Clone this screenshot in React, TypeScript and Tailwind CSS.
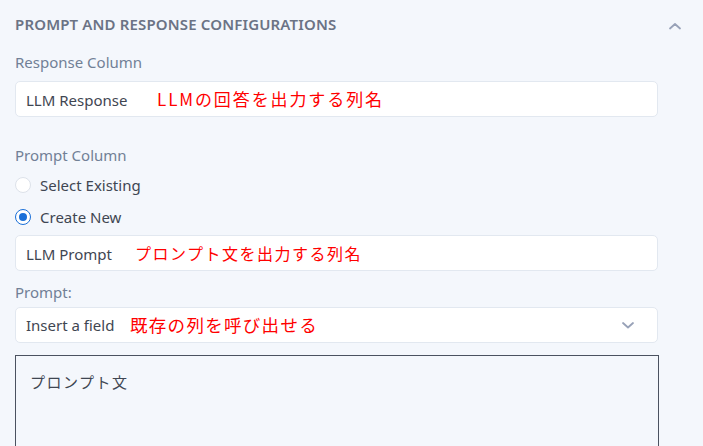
import React from "react";

const font = { fontFamily: '"Noto Sans", "Noto Sans CJK JP", sans-serif' };

function Label({ children, className = "" }: { children: React.ReactNode; className?: string }) {
  return <div className={`text-[15px] leading-[20px] text-[#718096] ${className}`}>{children}</div>;
}

function Note({ children, className = "" }: { children: React.ReactNode; className?: string }) {
  return (
    <span
      className={`text-[#ff0000] ${className}`}
      style={{ fontFamily: '"Noto Sans CJK JP", sans-serif' }}
    >
      {children}
    </span>
  );
}

function Field({ value, note, valueW, noteClass }: { value: string; note: string; valueW: string; noteClass: string }) {
  return (
    <div className="h-[36px] w-[643px] rounded-[5px] border border-[#e2e8f0] bg-white flex items-center pl-[10px] pr-[22px]">
      <span className={`text-[15px] text-[#3f4652] shrink-0 pt-[2px] ${valueW}`}>{value}</span>
      <Note className={noteClass}>{note}</Note>
    </div>
  );
}

function Radio({ checked, label }: { checked?: boolean; label: string }) {
  return (
    <div className="flex items-center gap-[9px] h-[32px]">
      {checked ? (
        <span className="w-[16px] h-[16px] rounded-full border-[1.5px] border-[#1a6fd8] bg-white flex items-center justify-center">
          <span className="w-[8px] h-[8px] rounded-full bg-[#1a6fd8]" />
        </span>
      ) : (
        <span className="w-[16px] h-[16px] rounded-full border border-[#dde2ea] bg-white" />
      )}
      <span className="text-[15px] text-[#3f4652]">{label}</span>
    </div>
  );
}

export default function App() {
  return (
    <div className="w-[703px] h-[446px] overflow-hidden bg-[#f4f7fc]" style={font}>
      <div className="pl-[15px] pt-[13px]">
        <div className="flex items-center w-[688px] h-[22px]">
          <div className="text-[15px] font-semibold text-[#6b7385] tracking-[0.15px]">
            PROMPT AND RESPONSE CONFIGURATIONS
          </div>
          <div className="flex-1" />
          <svg width="14" height="10" viewBox="0 0 14 10" className="mr-[21px] mt-[4px]">
            <path d="M2 7.5 L7 3 L12 7.5" fill="none" stroke="#98a2b8" strokeWidth="1.8" strokeLinecap="round" strokeLinejoin="round" />
          </svg>
        </div>

        <Label className="mt-[17px]">Response Column</Label>
        <div className="mt-[9px]">
          <Field value="LLM Response" valueW="w-[131px]" noteClass="text-[17px] tracking-[1.9px]" note="LLMの回答を出力する列名" />
        </div>

        <Label className="mt-[28px]">Prompt Column</Label>
        <div className="mt-[4px]">
          <Radio label="Select Existing" />
          <Radio checked label="Create New" />
        </div>
        <div className="mt-[2px]">
          <Field value="LLM Prompt" valueW="w-[109px]" noteClass="text-[16px] tracking-[1.5px]" note="プロンプト文を出力する列名" />
        </div>

        <Label className="mt-[11px]">Prompt:</Label>
        <div className="mt-[5px]">
          <div className="h-[36px] w-[643px] rounded-[5px] border border-[#e2e8f0] bg-white flex items-center pl-[10px] pr-[22px]">
            <span className="text-[15px] text-[#3f4652] w-[104px] shrink-0">Insert a field</span>
            <Note className="text-[17.5px] tracking-[1.3px]">既存の列を呼び出せる</Note>
            <div className="flex-1" />
            <svg width="14" height="10" viewBox="0 0 14 10">
              <path d="M2 3 L7 7.5 L12 3" fill="none" stroke="#98a2b8" strokeWidth="1.8" strokeLinecap="round" strokeLinejoin="round" />
            </svg>
          </div>
        </div>

        <div className="mt-[12px] w-[644px] h-[120px] border-[1.5px] border-[#4b5260] bg-[#f4f7fc] pl-[14px] pt-[14px]">
          <span className="text-[15px] text-[#3f4652] tracking-[1.5px]" style={{ fontFamily: '"Noto Sans CJK JP", sans-serif' }}>
            プロンプト文
          </span>
        </div>
      </div>
    </div>
  );
}
